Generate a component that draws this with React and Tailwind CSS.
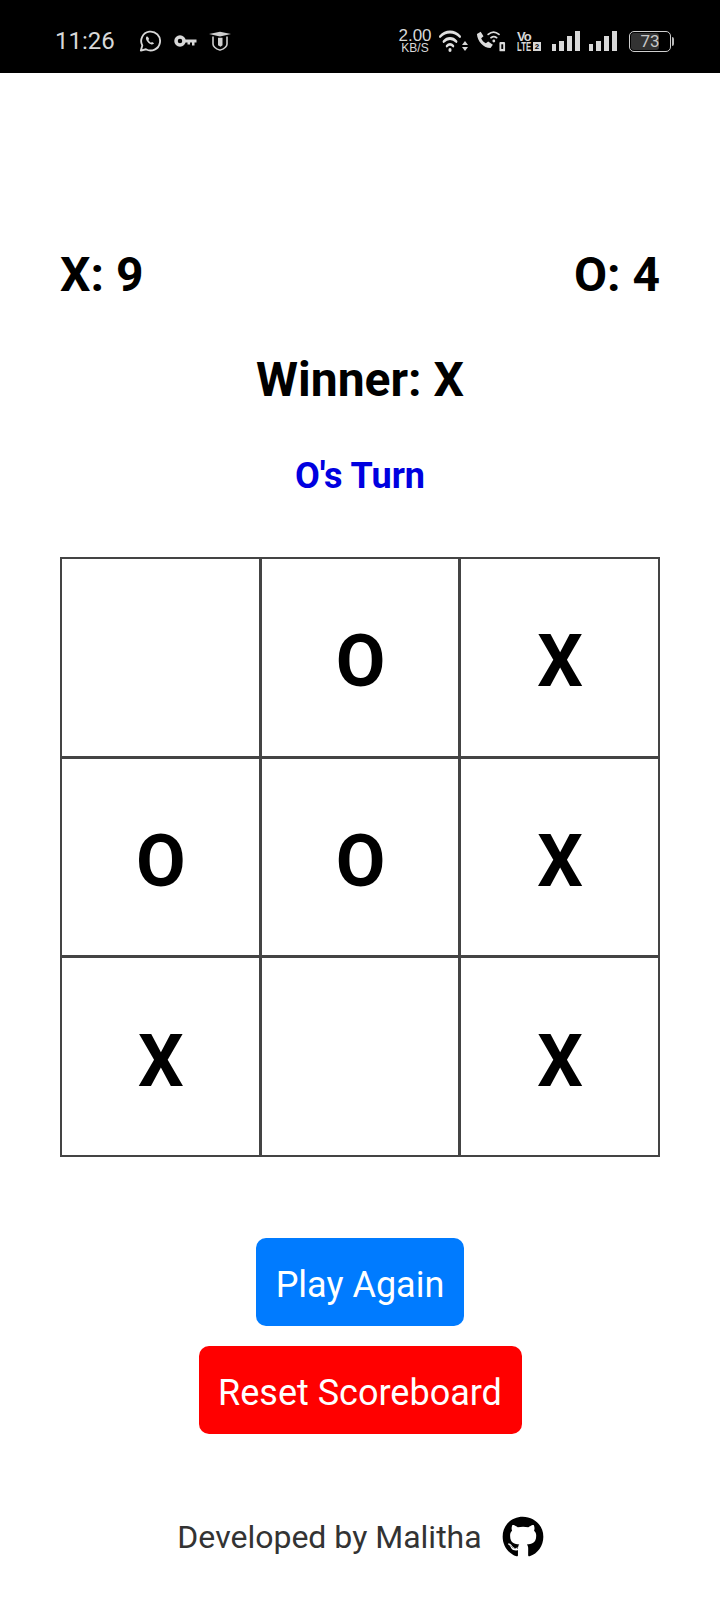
import { FaGithub } from "react-icons/fa"

const board = ['', 'O', 'X', 'O', 'O', 'X', 'X', '', 'X']

const Whatsapp = () => (
  <svg width="22" height="22" viewBox="0 0 24 24" fill="none" stroke="#d8d8d8" strokeWidth="2">
    <path d="M2 22.5l1.6-5.6A10.3 10.3 0 1 1 7.6 21z" strokeLinejoin="round" />
    <path d="M8.3 7.2c-1 1-1 2.500 0 4.200 1.200 2.100 3 3.600 4.800 4.200 1.500.5 2.700 0 3.400-1.100l-2.300-1.500-1.100.9c-1.200-.6-2.300-1.700-2.900-2.900l.9-1.100-1.400-2.500z" fill="#d8d8d8" stroke="none" />
  </svg>
)

const KeyIcon = () => (
  <svg width="23" height="14" viewBox="0 0 23 14" fill="none">
    <circle cx="6" cy="7" r="4" stroke="#d8d8d8" strokeWidth="3.500" />
    <path d="M10 5.500h12.500v3h-2v3h-2.500v-3h-2v2h-2.500v-2H10z" fill="#d8d8d8" />
  </svg>
)

const ShieldCap = () => (
  <svg width="24" height="20" viewBox="0 0 24 24" preserveAspectRatio="none" fill="none" stroke="#cfcfcf">
    <path d="M1 3.500 12 1l11 2.500-11 3z" fill="#cfcfcf" stroke="none" />
    <path d="M5 6.500v9c0 3.500 3.500 6 7 7.500 3.500-1.500 7-4 7-7.500v-9" strokeWidth="1.600" />
    <path d="M10 8h4.500v9l-2 2-2.500-2z" fill="#cfcfcf" stroke="none" />
  </svg>
)

const WifiIcon = () => (
  <svg width="22" height="24" viewBox="0 0 28 24" preserveAspectRatio="none" fill="none" stroke="#e0e0e0" strokeWidth="2.800" strokeLinecap="round">
    <path d="M1.500 7.500c7-6 18-6 25 0" />
    <path d="M6 12.500c4.500-4 11.500-4 16 0" />
    <path d="M10 17c2.300-2 5.700-2 8 0" />
    <circle cx="14" cy="21" r="2" fill="#e0e0e0" stroke="none" />
  </svg>
)

const CallWifi = () => (
  <svg width="30" height="24" viewBox="0 0 32 24" fill="none">
    <path d="M1 4.500 5 2l3 5-2.500 2c1 2.500 2.500 4 5 5.500L13 12.500l5 3.500-2.500 3.500C8 19.500 1.500 12.500 1 4.500z" fill="#dcdcdc" />
    <path d="M13 5c3.500-3 8-3 11.500 0M16 8.500c2-1.500 4-1.500 6 0" stroke="#dcdcdc" strokeWidth="1.800" strokeLinecap="round" />
    <circle cx="19" cy="12" r="1.500" fill="#dcdcdc" />
    <rect x="25" y="13" width="6" height="10" rx="1" fill="#dcdcdc" />
    <rect x="27" y="15.500" width="2" height="5" fill="#000" />
  </svg>
)

const Signal = () => (
  <div className="flex items-end gap-[3px] h-[20px]">
    <div className="w-[4px] h-[7px] bg-[#d8d8d8]" />
    <div className="w-[5px] h-[10px] bg-[#d8d8d8]" />
    <div className="w-[5px] h-[15px] bg-[#d8d8d8]" />
    <div className="w-[5px] h-[20px] bg-[#d8d8d8]" />
  </div>
)

const StatusBar = () => (
  <div className="h-[73px] bg-black flex items-start justify-between pl-[55px] pr-[46px] pt-[29px] font-['Roboto',sans-serif] text-[#d8d8d8]">
    <div className="flex items-center h-[24px]">
      <span className="text-[24px] leading-[24px] w-[84px]">11:26</span>
      <Whatsapp />
      <div className="ml-[13px]"><KeyIcon /></div>
      <div className="ml-[11px]"><ShieldCap /></div>
    </div>
    <div className="flex items-center h-[24px]">
      <div className="flex flex-col items-center w-[34px] font-['Liberation_Sans',sans-serif]">
        <span className="text-[17px] leading-[14px]">2.00</span>
        <span className="text-[12px] leading-[11px]">KB/S</span>
      </div>
      <div className="ml-[7px] flex items-center">
        <WifiIcon />
        <div className="flex flex-col gap-[2px] ml-[1px] mt-[10px]">
          <div className="w-0 h-0 border-x-[3px] border-x-transparent border-b-[4px] border-b-[#d8d8d8]" />
          <div className="w-0 h-0 border-x-[3px] border-x-transparent border-t-[4px] border-t-[#d8d8d8]" />
        </div>
      </div>
      <div className="ml-[8px]"><CallWifi /></div>
      <div className="ml-[11px] flex flex-col items-start font-['Liberation_Sans',sans-serif] font-bold w-[24px]">
        <span className="text-[13px] leading-[11px] tracking-[-1px]">Vo</span>
        <div className="flex items-center">
          <span className="w-[15px] text-[12px] leading-[10px] origin-left scale-x-[0.65] whitespace-nowrap">LTE</span>
          <span className="w-[8px] bg-[#d8d8d8] text-black text-[8px] leading-[9px] text-center ml-[1px]">2</span>
        </div>
      </div>
      <div className="ml-[11px]"><Signal /></div>
      <div className="ml-[9px]"><Signal /></div>
      <div className="ml-[12px] flex items-center">
        <div className="relative w-[42px] h-[21px] rounded-[5px] border-[1.5px] border-[#cfcfcf] overflow-hidden">
          <div className="absolute inset-y-[1px] left-[1px] w-[28px] bg-[#333] rounded-[3px]" />
          <span className="relative flex justify-center text-[17px] leading-[18px] text-[#c8c8c8]">73</span>
        </div>
        <div className="w-[2px] h-[9px] bg-[#b8b8b8] ml-[1px] rounded-r-sm" />
      </div>
    </div>
  </div>
)

const App = () => {
  return (
    <div className="w-[720px] h-[1600px] bg-white overflow-hidden font-['Roboto',sans-serif]">
      <StatusBar />
      <div className="flex justify-between w-[600px] mx-auto mt-[174px] text-[48px] leading-[56px] font-bold text-black">
        <span>X: 9</span>
        <span>O: 4</span>
      </div>
      <h2 className="mt-[49px] text-center text-[48px] leading-[56px] font-bold text-black">Winner: X</h2>
      <p className="mt-[47px] text-center text-[36px] leading-[42px] font-bold text-[#0000e0]">O's Turn</p>
      <div className="mt-[60px] mx-auto w-[600px] h-[600px] grid grid-cols-3 grid-rows-3 gap-[3px] border-2 border-[#444] bg-[#444]">
        {board.map((value, i) => (
          <div key={i} className="bg-white flex items-center justify-center pt-[10px] pl-[1px] text-[72px] font-bold text-black">
            {value}
          </div>
        ))}
      </div>
      <div className="mt-[81px] flex flex-col items-center gap-[20px]">
        <button className="h-[88px] w-[208px] pt-[5px] rounded-[10px] bg-[#007bff] text-white text-[36px]">Play Again</button>
        <button className="h-[88px] w-[323px] pt-[5px] rounded-[10px] bg-[#ff0000] text-white text-[36px]">Reset Scoreboard</button>
      </div>
      <div className="mt-[82px] flex items-center justify-center gap-[20px] text-[32px] leading-[40px] text-[#333] pl-[1px]">
        <span>Developed by Malitha</span>
        <FaGithub className="w-[42px] h-[42px] text-black" />
      </div>
    </div>
  )
}

export default App
